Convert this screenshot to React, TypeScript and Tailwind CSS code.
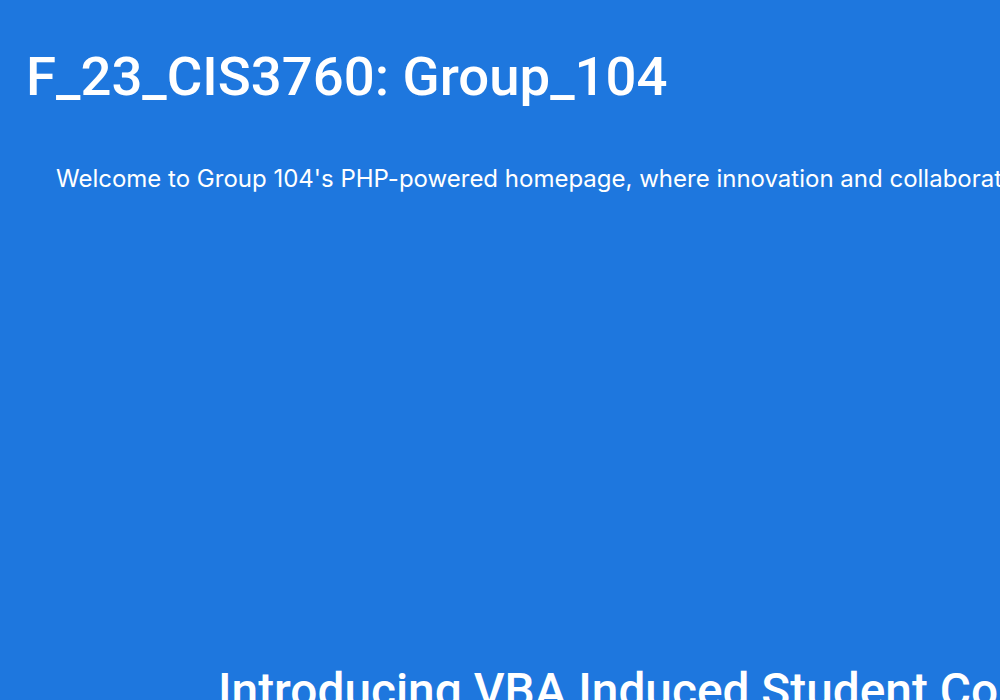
export default function App() {
    return (
        <div className="flex flex-col w-[1000px] h-[700px] overflow-hidden bg-[#1e77de] text-white">
            <h1 className="pt-[44px] pl-[26px] text-[54.5px] leading-[64px] font-medium whitespace-nowrap font-['Roboto','Noto_Sans',sans-serif]">
                F_23_CIS3760: Group_104
            </h1>
            <p className="mt-[55px] pl-[56px] text-[24px] leading-[32px] whitespace-nowrap font-['Inter','Noto_Sans',sans-serif]">
                Welcome to Group 104's PHP-powered homepage, where innovation and collaboration come together.
            </p>
            <h2 className="mt-[466px] pl-[218px] text-[47.8px] leading-[60px] font-medium whitespace-nowrap font-['Roboto','Noto_Sans',sans-serif]">
                Introducing VBA Induced Student Course Planner
            </h2>
        </div>
    );
}
